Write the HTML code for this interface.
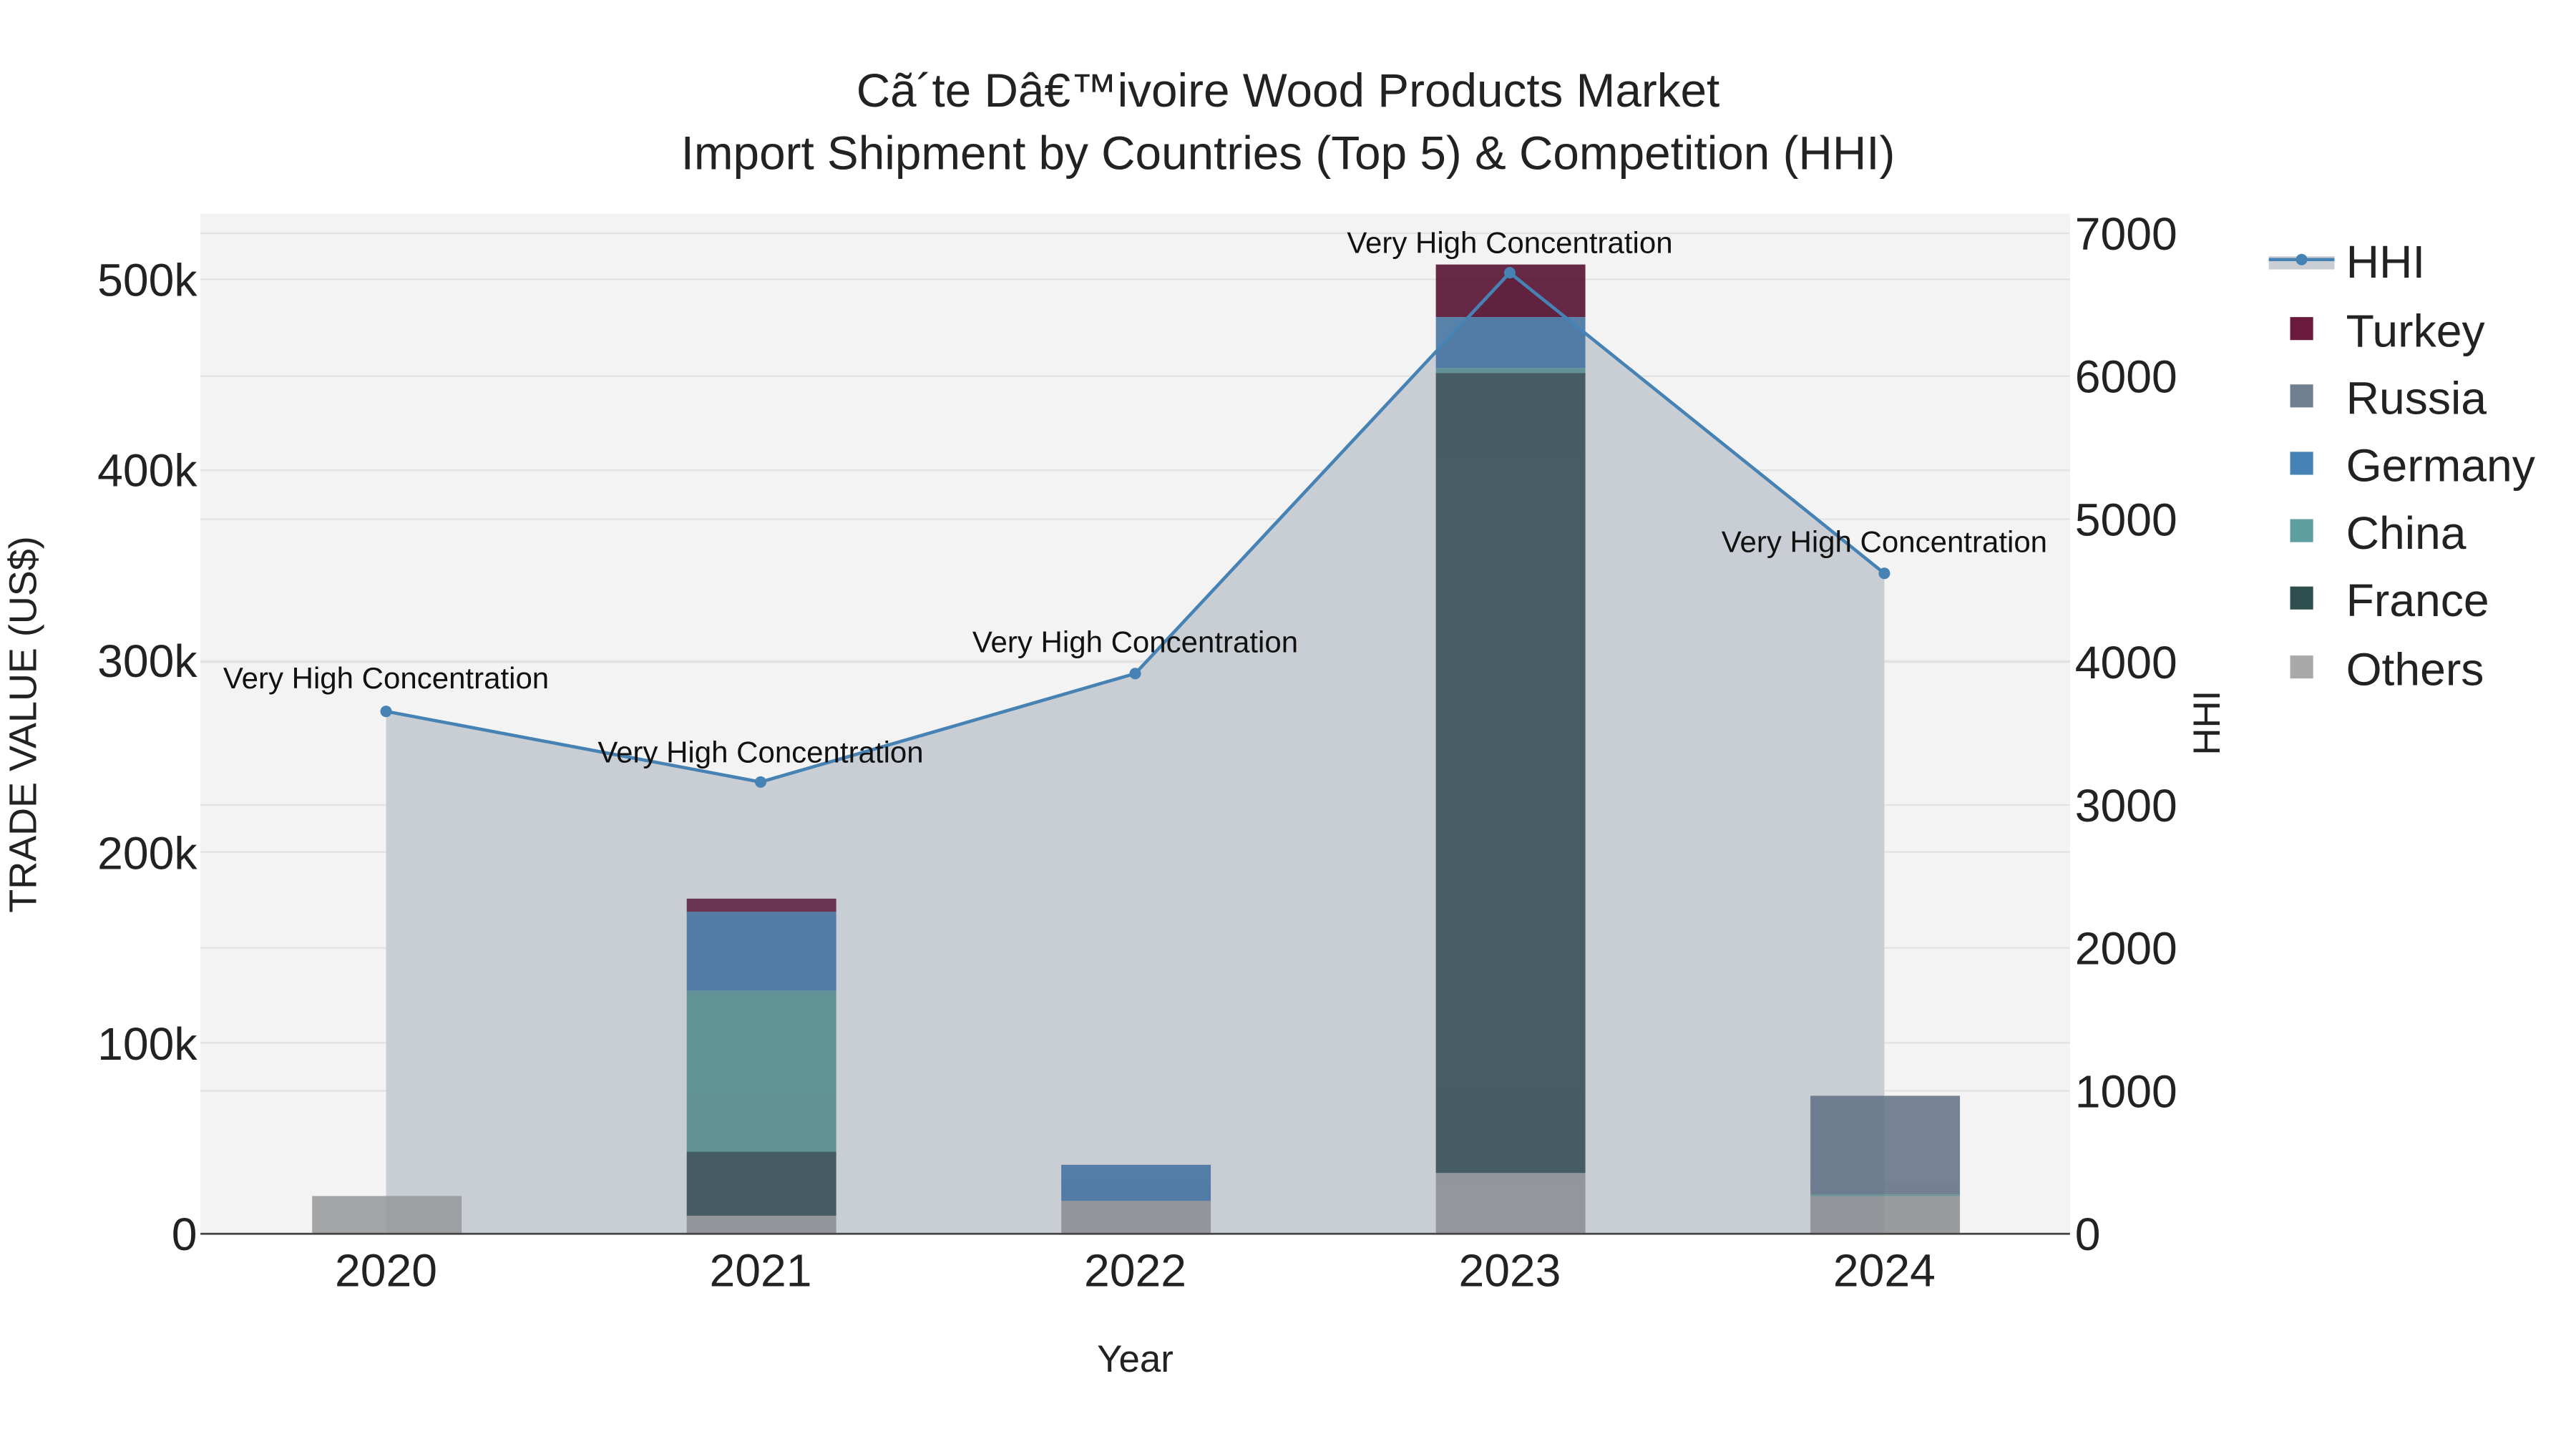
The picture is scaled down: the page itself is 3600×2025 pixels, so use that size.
<!DOCTYPE html>
<html><head><meta charset="utf-8"><style>
html,body{margin:0;padding:0;background:#fff;}
svg{display:block;}
text{font-family:"Liberation Sans",Arial,sans-serif;}
</style></head><body>
<svg width="3600" height="2025" viewBox="0 0 1568 882" xmlns="http://www.w3.org/2000/svg">
<rect width="1568" height="882" fill="#fff"/>
<rect x="122" y="130" width="1138" height="621" fill="#f3f3f3"/>
<g stroke="#e2e2e2" stroke-width="1">
<line x1="122" x2="1260" y1="634.8" y2="634.8"/><line x1="122" x2="1260" y1="518.6" y2="518.6"/>
<line x1="122" x2="1260" y1="402.4" y2="402.4"/><line x1="122" x2="1260" y1="286.2" y2="286.2"/>
<line x1="122" x2="1260" y1="170" y2="170"/>
<line x1="122" x2="1260" y1="664" y2="664"/><line x1="122" x2="1260" y1="577" y2="577"/>
<line x1="122" x2="1260" y1="490" y2="490"/><line x1="122" x2="1260" y1="403" y2="403"/>
<line x1="122" x2="1260" y1="316" y2="316"/><line x1="122" x2="1260" y1="229" y2="229"/>
<line x1="122" x2="1260" y1="142" y2="142"/>
</g>
<polygon points="235,751 235,433 463,476 691,410 919,166 1147,349 1147,751" fill="#c9cdd4"/>
<g opacity="0.85">
<rect x="190" y="728" width="91" height="23" fill="#959799"/>
<rect x="418" y="740" width="91" height="11" fill="#8a8c90"/>
<rect x="418" y="701" width="91" height="39" fill="#2f4a4f"/>
<rect x="418" y="603" width="91" height="98" fill="#4f8a8c"/>
<rect x="418" y="555" width="91" height="48" fill="#3e6f9e"/>
<rect x="418" y="547" width="91" height="8" fill="#5a1a3a"/>
<rect x="646" y="731" width="91" height="20" fill="#8a8c90"/>
<rect x="646" y="709" width="91" height="22" fill="#3e6f9e"/>
<rect x="874" y="714" width="91" height="37" fill="#8a8c90"/>
<rect x="874" y="227" width="91" height="487" fill="#2f4a4f"/>
<rect x="874" y="224" width="91" height="3" fill="#4f8a8c"/>
<rect x="874" y="193" width="91" height="31" fill="#3e6f9e"/>
<rect x="874" y="161" width="91" height="32" fill="#4e0526"/>
<rect x="1102" y="728" width="91" height="23" fill="#8a8c90"/>
<rect x="1102" y="727" width="91" height="1" fill="#4f8a8c"/>
<rect x="1102" y="667" width="91" height="60" fill="#5e6e82"/>
</g>
<polyline points="235,433 463,476 691,410 919,166 1147,349" fill="none" stroke="#4682b4" stroke-width="2"/>
<g fill="#4682b4"><circle cx="235" cy="433" r="3.5"/><circle cx="463" cy="476" r="3.5"/><circle cx="691" cy="410" r="3.5"/><circle cx="919" cy="166" r="3.5"/><circle cx="1147" cy="349" r="3.5"/></g>
<line x1="122" x2="1260" y1="751" y2="751" stroke="#444" stroke-width="1.2"/>
<g font-size="18.3" text-anchor="middle" fill="#111">
<text x="235" y="419">Very High Concentration</text>
<text x="463" y="464">Very High Concentration</text>
<text x="691" y="397">Very High Concentration</text>
<text x="919" y="154">Very High Concentration</text>
<text x="1147" y="336">Very High Concentration</text>
</g>
<g font-size="28.6" text-anchor="middle" fill="#222">
<text x="784" y="65">Cã´te Dâ€™ivoire Wood Products Market</text>
<text x="784" y="103">Import Shipment by Countries (Top 5) &amp; Competition (HHI)</text>
</g>
<g font-size="28" text-anchor="end" fill="#222">
<text x="120" y="761">0</text><text x="120" y="645">100k</text><text x="120" y="529">200k</text>
<text x="120" y="412">300k</text><text x="120" y="296">400k</text><text x="120" y="180">500k</text>
</g>
<g font-size="28" fill="#222">
<text x="1263" y="761">0</text><text x="1263" y="674">1000</text><text x="1263" y="587">2000</text>
<text x="1263" y="500">3000</text><text x="1263" y="413">4000</text><text x="1263" y="326">5000</text>
<text x="1263" y="239">6000</text><text x="1263" y="152">7000</text>
</g>
<g font-size="28" text-anchor="middle" fill="#222">
<text x="235" y="783">2020</text><text x="463" y="783">2021</text><text x="691" y="783">2022</text>
<text x="919" y="783">2023</text><text x="1147" y="783">2024</text>
</g>
<text x="691" y="835" font-size="23" text-anchor="middle" fill="#222">Year</text>
<text transform="translate(22,441) rotate(-90)" font-size="23.5" text-anchor="middle" fill="#222">TRADE VALUE (US$)</text>
<text transform="translate(1351,440) rotate(-90)" font-size="23" text-anchor="middle" fill="#222">HHI</text>
<rect x="1381" y="156" width="40" height="8" fill="#c9cdd4"/>
<line x1="1381" x2="1421" y1="158" y2="158" stroke="#4682b4" stroke-width="2"/>
<circle cx="1401" cy="158" r="3.5" fill="#4682b4"/>
<rect x="1394" y="193" width="14" height="14" fill="#6a1a3c"/>
<rect x="1394" y="234" width="14" height="14" fill="#708090"/>
<rect x="1394" y="275" width="14" height="14" fill="#4682b4"/>
<rect x="1394" y="316" width="14" height="14" fill="#5f9ea0"/>
<rect x="1394" y="357" width="14" height="14" fill="#2f4f4f"/>
<rect x="1394" y="399" width="14" height="14" fill="#a9a9a9"/>
<g font-size="28" fill="#222">
<text x="1428" y="169">HHI</text><text x="1428" y="211">Turkey</text><text x="1428" y="252">Russia</text>
<text x="1428" y="293">Germany</text><text x="1428" y="334">China</text><text x="1428" y="375">France</text>
<text x="1428" y="417">Others</text>
</g>
</svg>
</body></html>
